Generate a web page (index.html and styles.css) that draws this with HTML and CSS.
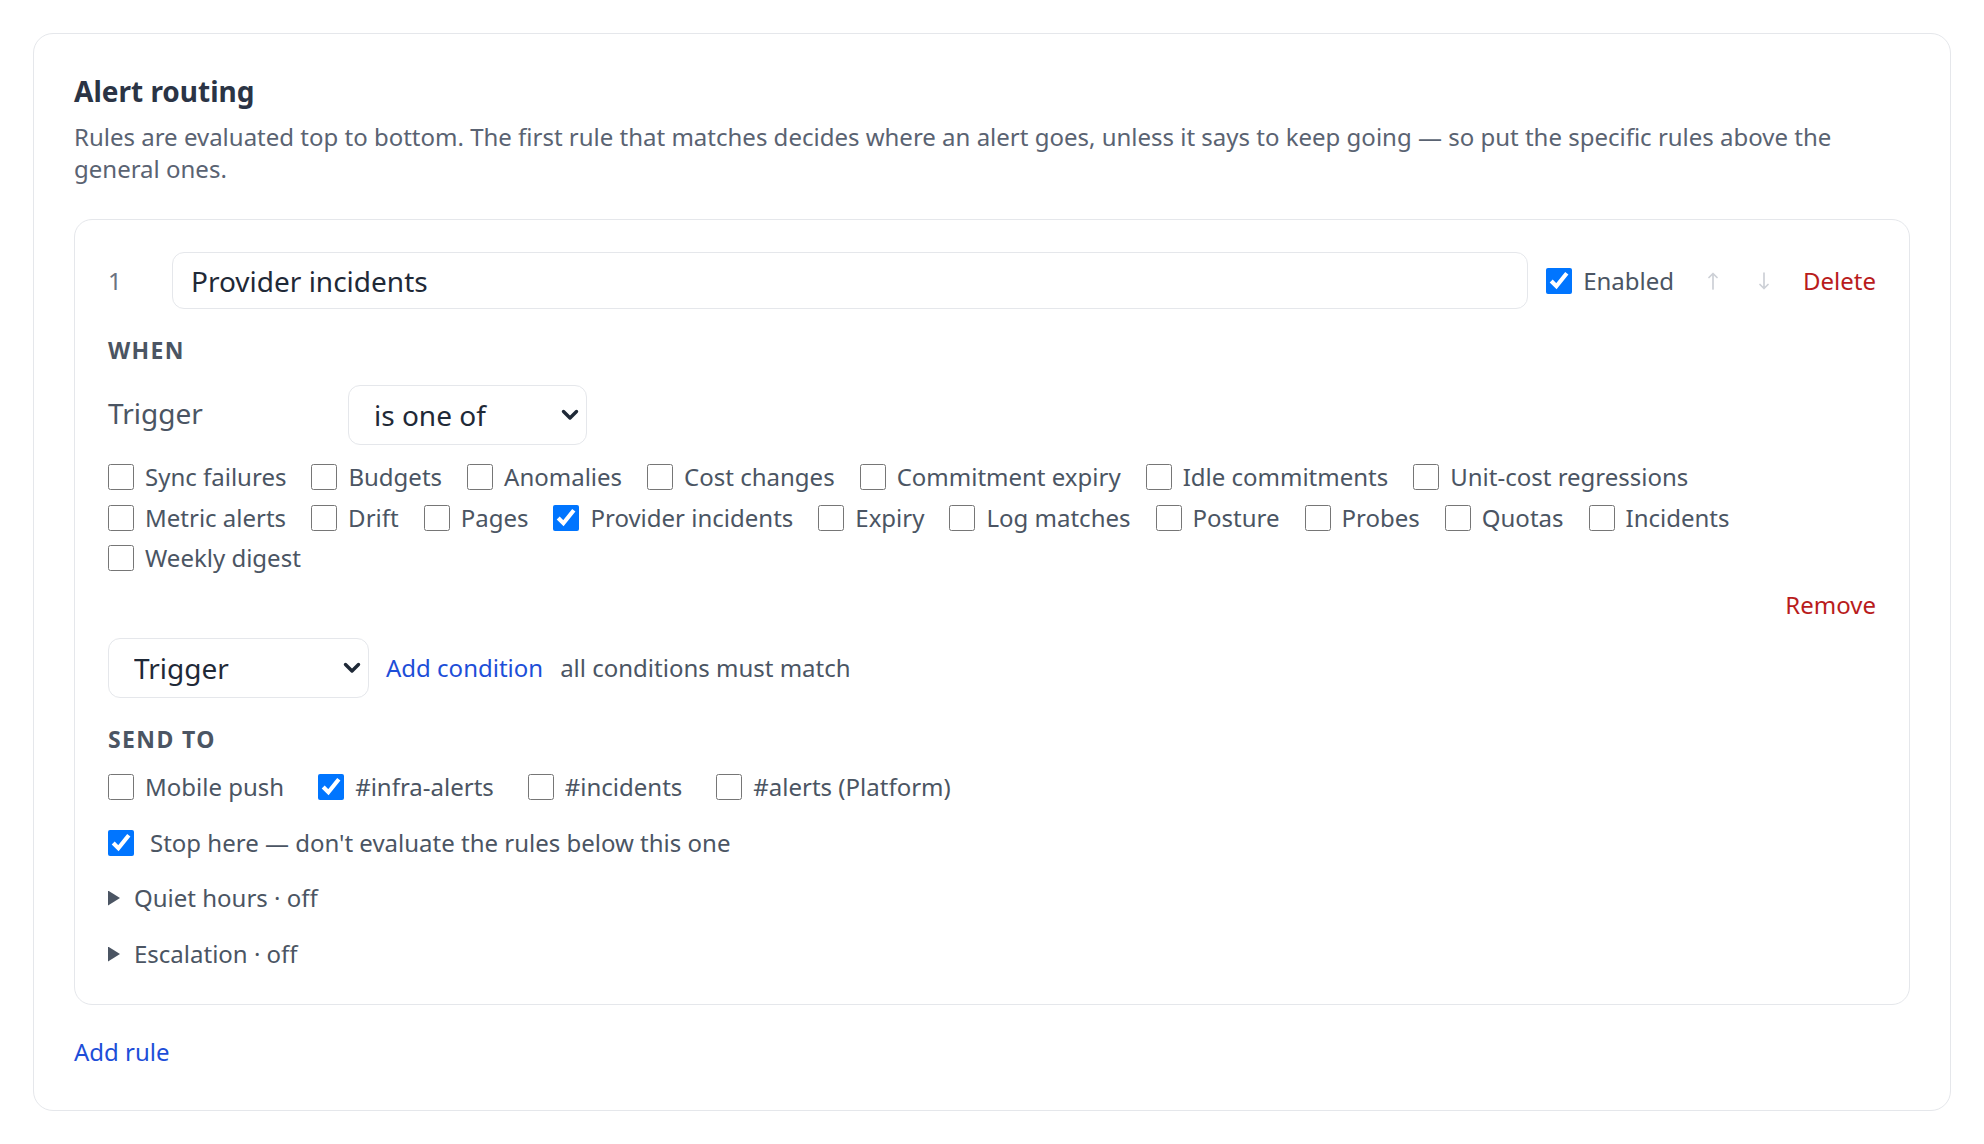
FILE: index.html
```html
<!DOCTYPE html>
<html lang="en">
<head>
<meta charset="utf-8">
<title>Alert routing</title>
<link rel="stylesheet" href="styles.css">
</head>
<body>
<main class="page">
  <section class="panel">
    <h1 class="panel-title">Alert routing</h1>
    <p class="panel-desc">Rules are evaluated top to bottom. The first rule that matches decides where an alert goes, unless it says to keep going — so put the specific rules above the general ones.</p>

    <div class="rule">
      <div class="rule-head">
        <span class="rule-num">1</span>
        <input class="rule-name" type="text" value="Provider incidents">
        <label class="check"><input type="checkbox" checked><span>Enabled</span></label>
        <button class="move" type="button" aria-label="Move up"><svg class="arrow" viewBox="0 0 10 18" width="10" height="18"><path d="M5 17V1.5M1 5.5l4-4 4 4" fill="none" stroke="currentColor" stroke-width="1.7" stroke-linecap="round" stroke-linejoin="round"/></svg></button>
        <button class="move" type="button" aria-label="Move down"><svg class="arrow" viewBox="0 0 10 18" width="10" height="18"><path d="M5 1v15.5M1 12.5l4 4 4-4" fill="none" stroke="currentColor" stroke-width="1.7" stroke-linecap="round" stroke-linejoin="round"/></svg></button>
        <button class="danger head-delete" type="button">Delete</button>
      </div>

      <h2 class="section-label">When</h2>
      <div class="cond-row">
        <span class="cond-field">Trigger</span>
        <span class="select-wrap">
          <select class="select select-op"><option>is one of</option></select>
          <svg class="chev" viewBox="0 0 18 12" width="18" height="12"><path d="M2.5 2.5L9 9l6.5-6.5" fill="none" stroke="currentColor" stroke-width="3.4" stroke-linecap="round" stroke-linejoin="round"/></svg>
        </span>
      </div>
      <div class="check-list">
        <label class="check"><input type="checkbox"><span>Sync failures</span></label>
        <label class="check"><input type="checkbox"><span>Budgets</span></label>
        <label class="check"><input type="checkbox"><span>Anomalies</span></label>
        <label class="check"><input type="checkbox"><span>Cost changes</span></label>
        <label class="check"><input type="checkbox"><span>Commitment expiry</span></label>
        <label class="check"><input type="checkbox"><span>Idle commitments</span></label>
        <label class="check"><input type="checkbox"><span>Unit-cost regressions</span></label>
        <label class="check"><input type="checkbox"><span>Metric alerts</span></label>
        <label class="check"><input type="checkbox"><span>Drift</span></label>
        <label class="check"><input type="checkbox"><span>Pages</span></label>
        <label class="check"><input type="checkbox" checked><span>Provider incidents</span></label>
        <label class="check"><input type="checkbox"><span>Expiry</span></label>
        <label class="check"><input type="checkbox"><span>Log matches</span></label>
        <label class="check"><input type="checkbox"><span>Posture</span></label>
        <label class="check"><input type="checkbox"><span>Probes</span></label>
        <label class="check"><input type="checkbox"><span>Quotas</span></label>
        <label class="check"><input type="checkbox"><span>Incidents</span></label>
        <label class="check"><input type="checkbox"><span>Weekly digest</span></label>
      </div>
      <div class="cond-actions">
        <button class="danger" type="button">Remove</button>
      </div>

      <div class="add-row">
        <span class="select-wrap">
          <select class="select select-field"><option>Trigger</option></select>
          <svg class="chev" viewBox="0 0 18 12" width="18" height="12"><path d="M2.5 2.5L9 9l6.5-6.5" fill="none" stroke="currentColor" stroke-width="3.4" stroke-linecap="round" stroke-linejoin="round"/></svg>
        </span>
        <button class="link" type="button">Add condition</button>
        <span class="muted">all conditions must match</span>
      </div>

      <h2 class="section-label">Send to</h2>
      <div class="send-list">
        <label class="check"><input type="checkbox"><span>Mobile push</span></label>
        <label class="check"><input type="checkbox" checked><span>#infra-alerts</span></label>
        <label class="check"><input type="checkbox"><span>#incidents</span></label>
        <label class="check"><input type="checkbox"><span>#alerts (Platform)</span></label>
      </div>

      <label class="check stop"><input type="checkbox" checked><span>Stop here — don't evaluate the rules below this one</span></label>

      <details class="fold fold-first"><summary>Quiet hours · off</summary></details>
      <details class="fold"><summary>Escalation · off</summary></details>
    </div>

    <button class="link add-rule" type="button">Add rule</button>
  </section>
</main>
</body>
</html>
```

FILE: styles.css
```css
* {
  box-sizing: border-box;
}

html, body {
  margin: 0;
  background: #ffffff;
}

body {
  font-family: "Noto Sans", "Open Sans", sans-serif;
  color: #4b5563;
  font-size: 24px;
  line-height: 36px;
}

.page {
  padding: 33px;
}

.panel {
  border: 1px solid #e5e7eb;
  border-radius: 20px;
  padding: 40px;
  background: #ffffff;
}

.panel-title {
  margin: 0 0 13px;
  font-size: 28px;
  line-height: 34px;
  font-weight: 700;
  color: #2b3445;
}

.panel-desc {
  margin: 0 0 34px;
  font-size: 24px;
  line-height: 32px;
  color: #5a6372;
}

.rule {
  border: 1px solid #e5e7eb;
  border-radius: 18px;
  padding: 32px 33px 32px 33px;
}

.rule-head {
  display: flex;
  align-items: center;
  gap: 18px;
}

.rule-num {
  width: 46px;
  flex: none;
  color: #6b7280;
}

.rule-name {
  flex: 1;
  min-width: 0;
  height: 57px;
  margin: 0;
  padding: 0 17px 0 18px;
  border: 1px solid #e5e7eb;
  border-radius: 12px;
  font-family: inherit;
  font-size: 28px;
  color: #1f2937;
  background: #ffffff;
  outline: none;
}

button {
  font-family: inherit;
  font-size: 24px;
  line-height: 36px;
  background: none;
  border: 0;
  padding: 0;
  margin: 0;
  cursor: pointer;
}

.move {
  width: 24px;
  height: 36px;
  display: inline-flex;
  align-items: center;
  justify-content: center;
  color: #cdd0d6;
  margin-left: 9px;
}

.arrow {
  display: block;
}

.head-delete {
  margin-left: 9px;
}

.danger {
  color: #b91c1c;
}

.link {
  color: #1d4ed8;
}

.check {
  display: inline-flex;
  align-items: center;
  gap: 11px;
  color: #4b5563;
  white-space: nowrap;
}

.check input {
  width: 26px;
  height: 26px;
  margin: 0;
  flex: none;
}

.section-label {
  margin: 26px 0 0;
  font-size: 23px;
  line-height: 30px;
  font-weight: 700;
  text-transform: uppercase;
  letter-spacing: 0.06em;
  color: #4b5563;
}

.cond-row {
  margin-top: 20px;
  display: flex;
  align-items: center;
}

.cond-field {
  width: 240px;
  font-size: 28px;
  line-height: 34px;
  padding-bottom: 5px;
  color: #4b5563;
}

.select-wrap {
  position: relative;
  display: inline-flex;
  color: #1f2937;
}

.select {
  height: 60px;
  margin: 0;
  padding: 0 40px 0 25px;
  border: 1px solid #e5e7eb;
  border-radius: 12px;
  background: #ffffff;
  font-family: inherit;
  font-size: 28px;
  color: #1f2937;
  appearance: none;
  -webkit-appearance: none;
}

.chev {
  position: absolute;
  right: 8px;
  top: 50%;
  margin-top: -6.5px;
  pointer-events: none;
}

.select-op {
  width: 239px;
}

.select-field {
  width: 261px;
}

.check-list {
  margin-top: 14px;
  display: flex;
  flex-wrap: wrap;
  column-gap: 25px;
  row-gap: 4.5px;
}

.cond-actions {
  margin-top: 11px;
  display: flex;
  justify-content: flex-end;
}

.add-row {
  margin-top: 15px;
  display: flex;
  align-items: center;
  gap: 17px;
}

.muted {
  color: #4b5563;
}

.send-list {
  margin-top: 15px;
  display: flex;
  flex-wrap: wrap;
  column-gap: 34px;
}

.stop {
  margin-top: 20px;
  display: flex;
  gap: 16px;
}

.fold {
  margin-top: 20px;
}

.fold-first {
  margin-top: 19px;
}

.fold summary {
  list-style: none;
  display: flex;
  align-items: center;
  gap: 14px;
  color: #4b5563;
  cursor: pointer;
}

.fold summary::-webkit-details-marker {
  display: none;
}

.fold summary::before {
  content: "";
  width: 12px;
  height: 15px;
  background: #4b5563;
  clip-path: polygon(0 0, 100% 50%, 0 100%);
  flex: none;
}

.add-rule {
  margin-top: 29px;
  display: block;
}
```
